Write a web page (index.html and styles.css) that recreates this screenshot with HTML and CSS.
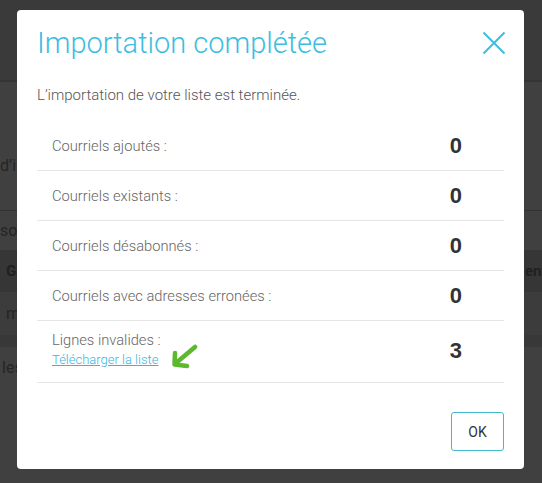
FILE: index.html
```html
<!DOCTYPE html>
<html lang="fr">
<head>
<meta charset="utf-8">
<title>Importation complétée</title>
<link rel="stylesheet" href="styles.css">
</head>
<body>
<div class="page">
  <div class="page-top"></div>
  <div class="page-sep"></div>
  <div class="page-intro"><span class="bg-text">d’i</span></div>
  <div class="page-line"></div>
  <div class="page-sub"><span class="bg-text">so</span></div>
  <div class="page-thead"><span class="bg-bold">Ga</span><span class="bg-bold right">ent</span></div>
  <div class="page-row"><span class="bg-text">m</span></div>
  <div class="page-gap"></div>
  <div class="page-foot"><span class="bg-text">les</span></div>
</div>

<div class="overlay">
  <div class="modal">
    <div class="modal-header">
      <h1 class="modal-title">Importation complétée</h1>
      <button class="close" aria-label="Fermer">
        <svg width="24" height="24" viewBox="0 0 24 24"><path d="M1.5 1.5 L22.5 22.5 M22.5 1.5 L1.5 22.5" stroke="#3dbde2" stroke-width="2" fill="none"/></svg>
      </button>
    </div>
    <p class="intro">L’importation de votre liste est terminée.</p>
    <div class="stats">
      <div class="stat"><span class="label">Courriels ajoutés :</span><span class="value">0</span></div>
      <div class="stat"><span class="label">Courriels existants :</span><span class="value">0</span></div>
      <div class="stat"><span class="label">Courriels désabonnés :</span><span class="value">0</span></div>
      <div class="stat"><span class="label">Courriels avec adresses erronées :</span><span class="value">0</span></div>
      <div class="stat stat-last">
        <div class="label-group">
          <span class="label">Lignes invalides :</span>
          <div class="link-line">
            <a class="link" href="#">Télécharger la liste</a>
            <svg class="arrow" width="30" height="26" viewBox="0 0 30 26"><path d="M26 3 L7 19 M6 9 L5.5 20.5 L18 22" stroke="#5cb82c" stroke-width="4.5" stroke-linecap="round" stroke-linejoin="round" fill="none"/></svg>
          </div>
        </div>
        <span class="value">3</span>
      </div>
    </div>
    <div class="modal-footer">
      <button class="ok">OK</button>
    </div>
  </div>
</div>
</body>
</html>
```
FILE: styles.css
```css
html, body {
  margin: 0;
  padding: 0;
}
body {
  width: 542px;
  height: 483px;
  overflow: hidden;
  background: #404040;
  font-family: Roboto, "Liberation Sans", sans-serif;
  position: relative;
}
.page {
  display: flex;
  flex-direction: column;
}
.page-top {
  height: 80px;
  background: #3a3a3a;
}
.page-sep {
  height: 2px;
  background: #353535;
}
.page-intro {
  height: 128px;
  display: flex;
  align-items: center;
  padding-top: 38px;
  box-sizing: border-box;
}
.page-line {
  height: 1px;
  background: #333;
}
.page-sub {
  height: 39px;
  display: flex;
  align-items: center;
}
.page-thead {
  height: 42px;
  background: #363636;
  display: flex;
  align-items: center;
  padding-left: 6px;
}
.page-row {
  height: 43px;
  display: flex;
  align-items: center;
  padding-left: 6px;
  background: #3c3c3c;
}
.page-gap {
  height: 12px;
  background: #383838;
}
.page-foot {
  height: 40px;
  display: flex;
  align-items: center;
  padding-left: 2px;
}
.bg-text {
  color: #252525;
  font-size: 16px;
}
.bg-bold {
  color: #202020;
  font-size: 15px;
  font-weight: bold;
}
.bg-bold.right {
  margin-left: auto;
  margin-right: 0;
  width: 17px;
  white-space: nowrap;
  overflow: hidden;
}

.overlay {
  position: absolute;
  inset: 0;
}
.modal {
  position: absolute;
  left: 17px;
  top: 10px;
  width: 507px;
  height: 459px;
  box-sizing: border-box;
  background: #fff;
  border-radius: 4px;
  padding: 0 20px;
  display: flex;
  flex-direction: column;
}
.modal-header {
  display: flex;
  justify-content: space-between;
  align-items: center;
  height: 66px;
}
.modal-title {
  margin: 0;
  font-weight: 300;
  font-size: 29px;
  color: #3dbde2;
}
.close {
  border: 0;
  background: none;
  padding: 0;
  margin-right: -2px;
  width: 24px;
  height: 24px;
  display: block;
}
.close svg {
  display: block;
}
.intro {
  margin: 9px 0 0;
  font-size: 15px;
  color: #555;
  line-height: 20px;
  font-weight: 300;
}
.stats {
  margin-top: 16px;
  display: flex;
  flex-direction: column;
}
.stat {
  height: 50px;
  box-sizing: border-box;
  border-bottom: 1px solid #e6e6e6;
  display: flex;
  align-items: center;
  justify-content: space-between;
  padding: 0 42px 0 15px;
}
.stat-last {
  height: 62px;
  padding-bottom: 2px;
}
.label {
  font-size: 14.7px;
  color: #666;
  font-weight: 300;
}
.value {
  font-size: 22px;
  font-weight: 700;
  color: #333;
  font-family: "Liberation Sans", Arial, sans-serif;
}
.label-group {
  display: flex;
  flex-direction: column;
}
.link-line {
  display: flex;
  align-items: center;
  gap: 11px;
  height: 22px;
}
.link {
  font-size: 13px;
  color: #3cb4dc;
  text-decoration: underline;
  font-weight: 300;
}
.arrow {
  margin-top: -6px;
}
.modal-footer {
  display: flex;
  justify-content: flex-end;
  margin-top: 29px;
}
.ok {
  width: 53px;
  height: 39px;
  border: 1px solid #44b8cf;
  border-radius: 3px;
  background: #fff;
  font-family: Roboto, "Liberation Sans", sans-serif;
  font-size: 14px;
  color: #333;
}
```
